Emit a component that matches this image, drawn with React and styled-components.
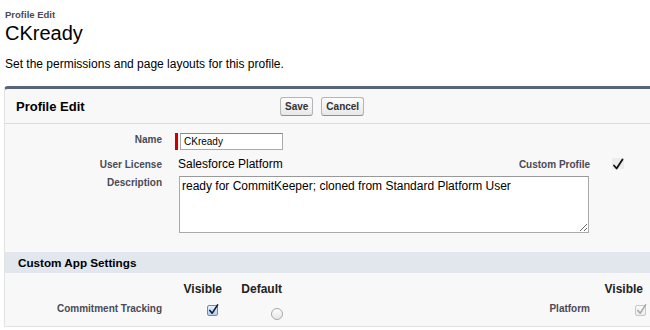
import React from 'react'
import styled, { createGlobalStyle } from 'styled-components'

const GlobalStyle = createGlobalStyle`
  body {
    margin: 0;
    background: #fff;
    overflow: hidden;
    font-family: 'Liberation Sans', Arial, sans-serif;
  }
`

const Page = styled.div`
  padding: 9px 0 0 4px;
  width: 720px;
`

const PageHead = styled.div`
  padding-left: 1px;
`

const PageType = styled.div`
  font-size: 9.5px;
  font-weight: bold;
  color: #4a4a56;
  line-height: 12px;
`

const PageTitle = styled.h1`
  margin: 0;
  font-size: 20px;
  font-weight: normal;
  color: #000;
  line-height: 24px;
`

const Intro = styled.p`
  margin: 12px 0 15px;
  font-size: 12px;
  color: #000;
  line-height: 14px;
`

const Panel = styled.div`
  background: #f8f8f8;
  border: 1px solid #e0e3e5;
  border-top: 3px solid #56657a;
  border-radius: 4px 4px 0 0;
`

const PanelHeader = styled.div`
  display: flex;
  align-items: center;
  height: 34px;
  border-bottom: 1px solid #dbdbdb;
`

const PanelTitle = styled.h2`
  margin: 0;
  width: 264px;
  padding-left: 11px;
  font-size: 13px;
  font-weight: bold;
  color: #000;
`

const Buttons = styled.div`
  display: flex;
  gap: 8px;
`

const Button = styled.button`
  height: 19px;
  padding: 0 4px;
  font-family: inherit;
  font-size: 10px;
  font-weight: bold;
  color: #333;
  border: 1px solid #b5b5b5;
  border-bottom-color: #8f8f8f;
  border-radius: 3px;
  background: linear-gradient(#fdfdfd, #e8e8e8);
`

const Details = styled.div`
  display: grid;
  grid-template-columns: 167px 283px 145px 1fr;
  padding: 7px 0 17px;
`

const Label = styled.div`
  text-align: right;
  padding-right: 10px;
  font-size: 10px;
  font-weight: bold;
  color: #4a4a56;
  line-height: 12px;
  padding-top: ${p => p.$top ?? 4}px;
  height: ${p => p.$h || 22}px;
  box-sizing: border-box;
`

const Data = styled.div`
  padding-left: ${p => p.$left || 6}px;
  font-size: 12px;
  color: #000;
  padding-top: ${p => p.$top ?? 3}px;
  grid-column: ${p => p.$span ? `span ${p.$span}` : 'auto'};
`

const Required = styled.div`
  display: inline-flex;
  border-left: 3px solid #c00;
  padding-left: 2px;
  margin-left: -3px;
`

const TextInput = styled.input`
  width: 103px;
  height: 17px;
  box-sizing: border-box;
  padding: 0 3px;
  font-family: inherit;
  font-size: 10px;
  color: #000;
  border: 1px solid #aaa;
  border-top-color: #888;
  background: #fff;
  margin: 0;
`

const TextArea = styled.textarea`
  display: block;
  width: 410px;
  height: 57px;
  box-sizing: border-box;
  margin: -1px 0 0 1px;
  padding: 2px 2px;
  font-family: inherit;
  font-size: 12px;
  color: #000;
  border: 1px solid #aaa;
  border-top-color: #999;
  background: #fff;
`

const Section = styled.h3`
  margin: 0;
  height: 21px;
  line-height: 21px;
  padding-left: 13px;
  background: #e2e6ed;
  font-size: 11.7px;
  font-weight: bold;
  color: #000;
`

const AppGrid = styled.div`
  display: grid;
  grid-template-columns: 167px 51px 60px 167px 150px 46px;
  padding-top: 7px;
`

const ColHead = styled.div`
  text-align: right;
  font-size: 12px;
  font-weight: bold;
  color: #222;
  height: 18px;
  line-height: 18px;
  padding-right: ${p => p.$pr || 0}px;
`

const Cell = styled.div`
  display: flex;
  justify-content: flex-end;
  align-items: flex-start;
  padding-right: ${p => p.$pr || 0}px;
  padding-top: ${p => p.$top || 5}px;
`

const Box = styled.span`
  position: relative;
  display: inline-block;
  width: 11px;
  height: 11px;
  box-sizing: border-box;
  border: 1px solid ${p => p.$disabled ? '#c8c8c8' : '#6d8cb3'};
  border-radius: 2px;
  background: ${p => p.$disabled ? 'linear-gradient(#fafafa, #ececec)' : 'linear-gradient(#e6f0fb, #b6cfee)'};
  svg {
    position: absolute;
    left: 0;
    top: -3px;
  }
`

const Radio = styled.span`
  display: inline-block;
  width: 12px;
  height: 12px;
  box-sizing: border-box;
  border: 1px solid #a8a8a8;
  border-radius: 50%;
  background: linear-gradient(#fdfdfd, #e6e6e6);
`

const CheckImg = styled.span`
  display: inline-block;
  width: 12px;
  height: 11px;
  background: #ececec;
`

const Check = ({ color = '#111', w = 12 }) => (
  <svg width={w} height="13" viewBox="0 0 12 13">
    <path d="M2 7.5 L4.6 10.5 L10.5 1.5" fill="none" stroke={color} strokeWidth="1.8" strokeLinecap="round" strokeLinejoin="round" />
  </svg>
)

export default function App() {
  return (
    <>
      <GlobalStyle />
      <Page>
        <PageHead>
          <PageType>Profile Edit</PageType>
          <PageTitle>CKready</PageTitle>
          <Intro>Set the permissions and page layouts for this profile.</Intro>
        </PageHead>
        <Panel>
          <PanelHeader>
            <PanelTitle>Profile Edit</PanelTitle>
            <Buttons>
              <Button>Save</Button>
              <Button>Cancel</Button>
            </Buttons>
          </PanelHeader>
          <Details>
            <Label $top={3}>Name</Label>
            <Data $span={3} $top={2}>
              <Required><TextInput defaultValue="CKready" /></Required>
            </Data>
            <Label $top={6} $h={24}>User License</Label>
            <Data $top={4}>Salesforce Platform</Data>
            <Label $top={6} $h={24}>Custom Profile</Label>
            <Data $left={12} $top={5}>
              <CheckImg><Check /></CheckImg>
            </Data>
            <Label $top={0} $h={58}>Description</Label>
            <Data $span={2} $top={0}>
              <TextArea defaultValue="ready for CommitKeeper; cloned from Standard Platform User" />
            </Data>
            <div />
          </Details>
          <Section>Custom App Settings</Section>
          <AppGrid>
            <div />
            <ColHead $pr={1}>Visible</ColHead>
            <ColHead $pr={1}>Default</ColHead>
            <div />
            <div />
            <ColHead $pr={3}>Visible</ColHead>

            <Label $top={5} $h={28}>Commitment Tracking</Label>
            <Cell $pr={5} $top={7}>
              <Box><Check w={11} color="#0b1f3a" /></Box>
            </Cell>
            <Cell $top={10}>
              <Radio />
            </Cell>
            <div />
            <Label $top={5} $h={28}>Platform</Label>
            <Cell $top={7}>
              <Box $disabled><Check w={11} color="#a9a9a9" /></Box>
            </Cell>
          </AppGrid>
        </Panel>
      </Page>
    </>
  )
}
